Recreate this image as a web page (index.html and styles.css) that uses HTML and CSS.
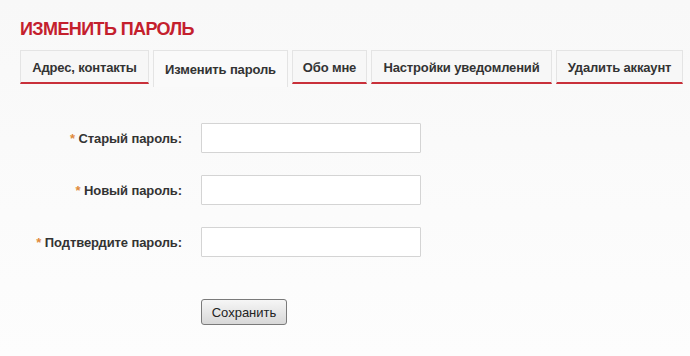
FILE: index.html
```html
<!DOCTYPE html>
<html lang="ru">
<head>
<meta charset="utf-8">
<link rel="stylesheet" href="styles.css">
</head>
<body>
<div class="page">
  <h1 class="title">ИЗМЕНИТЬ ПАРОЛЬ</h1>
  <ul class="tabs">
    <li class="tab tab-address">Адрес, контакты</li>
    <li class="tab tab-password active">Изменить пароль</li>
    <li class="tab tab-about">Обо мне</li>
    <li class="tab tab-notify">Настройки уведомлений</li>
    <li class="tab tab-delete">Удалить аккаунт</li>
  </ul>
  <form class="form">
    <div class="row">
      <label class="label"><span class="req">*</span> Старый пароль:</label>
      <input class="input" type="password">
    </div>
    <div class="row">
      <label class="label"><span class="req">*</span> Новый пароль:</label>
      <input class="input" type="password">
    </div>
    <div class="row">
      <label class="label"><span class="req">*</span> Подтвердите пароль:</label>
      <input class="input" type="password">
    </div>
    <div class="actions">
      <button class="btn" type="button">Сохранить</button>
    </div>
  </form>
</div>
</body>
</html>
```
FILE: styles.css
```css
html, body {
  margin: 0;
  padding: 0;
  background: #fafafa;
  font-family: "Liberation Sans", Arial, sans-serif;
}
.page {
  width: 690px;
  height: 356px;
  padding: 0 0 0 20px;
  box-sizing: border-box;
  background: linear-gradient(#f8f8f8, #fdfdfd);
}
.title {
  margin: 0;
  padding-top: 19px;
  font-size: 18px;
  line-height: 20px;
  font-weight: bold;
  color: #c4202d;
  letter-spacing: -0.6px;
}
.tabs {
  list-style: none;
  margin: 11px 0 0 0;
  padding: 0;
  display: flex;
  gap: 4px;
  height: 34px;
}
.tab {
  box-sizing: border-box;
  height: 34px;
  padding: 0;
  border: 1px solid #e4e4e4;
  border-bottom: 2px solid #c9303a;
  background: #f7f7f7;
  font-size: 13px;
  font-weight: bold;
  color: #333;
  line-height: 33px;
  text-align: center;
  white-space: nowrap;
  letter-spacing: -0.15px;
}
.tab-address { width: 129px; }
.tab-password { width: 135px; }
.tab-about { width: 75px; }
.tab-notify { width: 181px; }
.tab-delete { width: 127px; }
.tab.active {
  height: 37px;
  border-bottom: none;
  background: #fafafa;
  line-height: 37px;
}
.form {
  margin-top: 39px;
}
.row {
  display: flex;
  align-items: center;
  height: 30px;
  margin-bottom: 22px;
}
.label {
  width: 162px;
  text-align: right;
  font-size: 13px;
  font-weight: bold;
  color: #333;
  margin-right: 19px;
  letter-spacing: -0.1px;
}
.req {
  color: #e08a3c;
}
.input {
  box-sizing: border-box;
  width: 220px;
  height: 30px;
  margin: 0;
  border: 1px solid #d4d4d4;
  background: #fff;
  border-radius: 1px;
}
.actions {
  padding-left: 181px;
  margin-top: 42px;
}
.btn {
  box-sizing: border-box;
  width: 86px;
  height: 26px;
  border: 1px solid #7a7a7a;
  border-radius: 3px;
  background: linear-gradient(#f6f6f6, #d8d8d8);
  font-family: "Liberation Sans", Arial, sans-serif;
  font-size: 13px;
  color: #222;
  padding: 0;
}
```
